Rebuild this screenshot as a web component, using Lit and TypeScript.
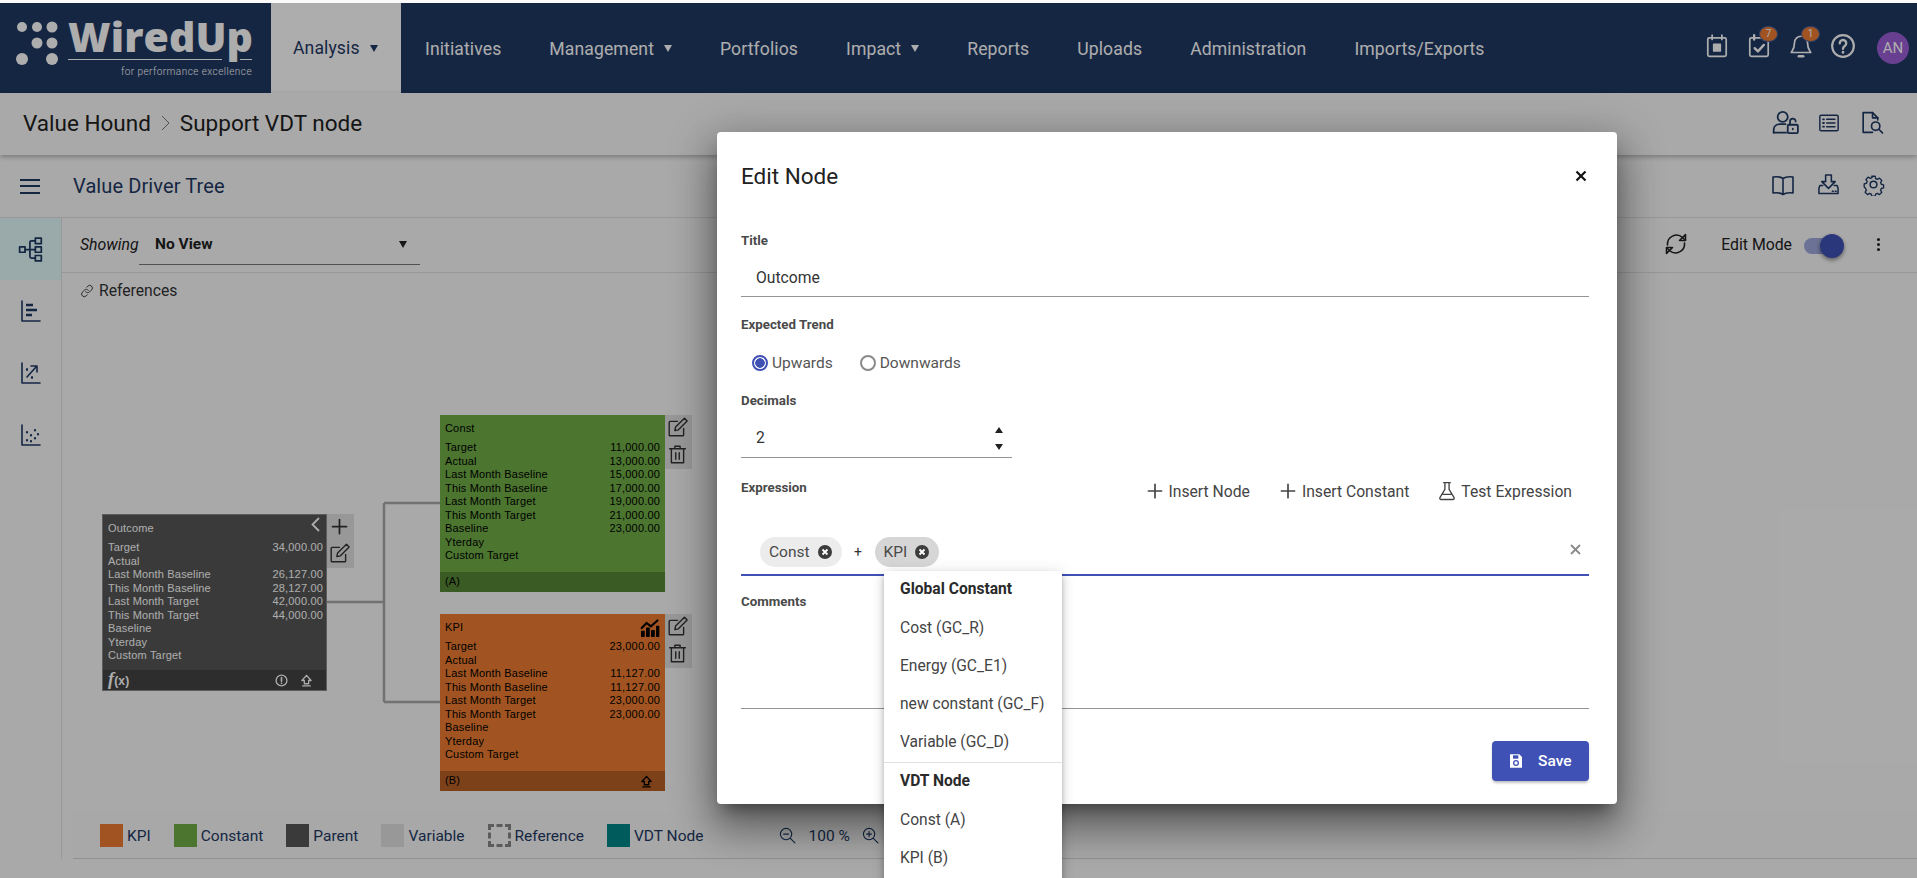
import { LitElement, html, css, svg } from "lit";
import { customElement } from "lit/decorators.js";

// stroke icons share one wrapper, 24 unit box
const icon = (body: unknown, size = 24) => html`<svg class="ico" width=${size} height=${size} viewBox="0 0 24 24" fill="none" stroke="currentColor" stroke-width="1.6" stroke-linecap="round" stroke-linejoin="round">${body}</svg>`;

const ICONS = {
    calendar: svg`<rect x="3.5" y="4.5" width="17" height="17" rx="1.5"/><path d="M7.5 2v4M16.5 2v4"/><rect x="9" y="10.5" width="6" height="6" fill="currentColor"/>`,
    tasks: svg`<rect x="3.5" y="4.5" width="17" height="17" rx="1.5"/><path d="M7.5 2v4M16.5 2v4M8 14l3 3 5.5-6" stroke-width="2.2"/>`,
    bell: svg`<path d="M12 3a6 6 0 0 0-6 6c0 6-2.5 8-3 9h18c-.5-1-3-3-3-9a6 6 0 0 0-6-6z"/><path d="M10 21.5h4" stroke-width="2.4"/>`,
    help: svg`<circle cx="12" cy="12" r="10" stroke-width="2"/><path d="M9 9.5a3 3 0 1 1 4.6 2.5c-1 .7-1.6 1.2-1.6 2.5" stroke-width="2.2"/><path d="M12 17.5v.5" stroke-width="2.4"/>`,
    userLock: svg`<circle cx="9.5" cy="7" r="4.5"/><path d="M1.5 21v-2.5c0-3 2.5-5 5.5-5h5"/><path d="M1.5 21h11"/><rect x="14" y="14" width="9" height="7.5" rx="1"/><path d="M16 14v-3a2.5 2.5 0 0 1 5 0"/><path d="M18.5 17.5v.5"/>`,
    list: svg`<rect x="2" y="3.5" width="20" height="17" rx="1.5"/><path d="M9.5 8h9M9.5 12h9M9.5 16h9"/><path d="M5.5 8h1M5.5 12h1M5.5 16h1" stroke-width="2"/>`,
    docSearch: svg`<path d="M13 21.5H4V2.5h9l5 5v2"/><path d="M13 2.5v5h5"/><circle cx="16" cy="15.5" r="4"/><path d="M19 18.5l3.5 3.5"/>`,
    book: svg`<path d="M12 5.5C10 4 6 3.500 2 4v16c4-.5 8 0 10 1.500 2-1.500 6-2 10-1.500V4c-4-.5-8 0-10 1.500zM12 5.500v16"/>`,
    download: svg`<path d="M9 2h6v7h4l-7 7-7-7h4z"/><path d="M6 13H3l-1 3v5.500h20V16l-1-3h-3"/><path d="M16 19h1M19 19h1"/>`,
    gear: svg`<circle cx="12" cy="12" r="3.500"/><path d="M10 2.500h4l.6 2.800 2 .9 2.500-1.500 2.800 2.800-1.500 2.500.9 2 2.700.7v3.600l-2.700.7-.9 2 1.500 2.500-2.800 2.800-2.500-1.500-2 .9-.6 2.500h-4l-.6-2.500-2-.9-2.500 1.500-2.800-2.800 1.500-2.500-.9-2L1 15.100v-3.600l2.700-.7.9-2-1.500-2.500 2.800-2.800 2.500 1.500 2-.9z" transform="translate(1.400 1.200) scale(.88)"/>`,
    refresh: svg`<path d="M3.500 13a9 9 0 0 1 15-7.500L21 8"/><path d="M21.500 2.500V8.500h-6z"/><path d="M20.500 11a9 9 0 0 1-15 7.500L3 16"/><path d="M2.500 21.500V15.500h6z"/>`,
    tree: svg`<rect x="1.500" y="10" width="5" height="5"/><rect x="16" y="2" width="5.500" height="5"/><rect x="16" y="10" width="5.500" height="5"/><rect x="16" y="18" width="5.500" height="5"/><path d="M6.500 12.500H16M16 4.500h-3.500a1.500 1.500 0 0 0-1.500 1.500v13a1.500 1.500 0 0 0 1.500 1.500H16"/>`,
    bars: svg`<path d="M3 2v20h18"/><path d="M7 6h7M7 11h11M7 16h6" stroke-width="2.500" stroke-linecap="butt"/>`,
    scatterUp: svg`<path d="M3 2v20h18"/><path d="M8 16L17 6M12 5h6v6"/><path d="M8 8v1M13 16v1" stroke-width="2"/>`,
    scatter: svg`<path d="M3 2v20h18"/><path d="M8 17v.5M12 12v.5M16 7v.5M8 9v.5M16 15v.5M12 18v.5M19 11v.5" stroke-width="2.200"/>`,
    link: svg`<path d="M9.500 13a4.500 4.500 0 0 0 7 .5l3.500-3.500a4.600 4.600 0 0 0-6.500-6.500l-2 2"/><path d="M14.500 11a4.500 4.500 0 0 0-7-.5L4 14a4.600 4.600 0 0 0 6.500 6.500l2-2"/>`,
    plus: svg`<path d="M12 4v16M4 12h16" stroke-width="2"/>`,
    edit: svg`<path d="M19 13v7.500a1 1 0 0 1-1 1H3.500a1 1 0 0 1-1-1V6a1 1 0 0 1 1-1H12"/><path d="M9 15.500l.8-4L20 1.500l3 3-10 10.200z"/>`,
    trash: svg`<path d="M3 5.500h18M9 5.500V2.500h6v3M5 5.500v16h14v-16M10 10v7.500M14 10v7.500"/>`,
    flask: svg`<path d="M8 2h8M9.500 2v8L3.500 20a1.500 1.500 0 0 0 1.300 2.200h14.400a1.500 1.500 0 0 0 1.300-2.200L14.500 10V2M7 16h10"/>`,
    zoomOut: svg`<circle cx="10" cy="10" r="8"/><path d="M16 16l6.500 6.500M6.500 10h7"/>`,
    zoomIn: svg`<circle cx="10" cy="10" r="8"/><path d="M16 16l6.500 6.500M6.500 10h7M10 6.500v7"/>`,
    upload: svg`<path d="M12 2.500L3.500 12H8v6h8v-6h4.500zM5 22h14" stroke-width="2.400"/>`,
    info: svg`<circle cx="12" cy="12" r="10" stroke-width="2.400"/><path d="M12 6.500v7M12 17v.5" stroke-width="3"/>`,
    chart: svg`<path d="M2 12l6-6 5 4 8-7" stroke-width="2.600"/><g fill="currentColor" stroke-width="1.400"><rect x="2" y="16" width="3" height="6"/><rect x="8" y="12" width="3" height="10"/><rect x="14" y="15" width="3" height="7"/><rect x="20" y="10" width="2.500" height="12"/></g>`,
    save: svg`<path d="M3 2h14l4 4v16H3z" fill="currentColor" stroke="none"/><rect x="7.500" y="3.500" width="8" height="5" fill="#3f51b5" stroke="none"/><circle cx="12" cy="15" r="3.500" fill="none" stroke="#3f51b5" stroke-width="2"/>`,
};

const chipCancel = html`<svg class="chip-x" width="14" height="14" viewBox="0 0 14 14"><circle cx="7" cy="7" r="7" fill="#3c3c3c"/><path d="M4.500 4.500l5 5M9.500 4.500l-5 5" stroke="#fff" stroke-width="1.800"/></svg>`;

const NAV = [
    { label: "Analysis", caret: true, active: true },
    { label: "Initiatives" },
    { label: "Management", caret: true },
    { label: "Portfolios" },
    { label: "Impact", caret: true },
    { label: "Reports" },
    { label: "Uploads" },
    { label: "Administration" },
    { label: "Imports/Exports" },
];

const LEGEND = [
    { label: "KPI", cls: "kpi" },
    { label: "Constant", cls: "constant" },
    { label: "Parent", cls: "parent" },
    { label: "Variable", cls: "variable" },
    { label: "Reference", cls: "reference" },
    { label: "VDT Node", cls: "vdt" },
];

const ROW_NAMES = ["Target", "Actual", "Last Month Baseline", "This Month Baseline", "Last Month Target", "This Month Target", "Baseline", "Yterday", "Custom Target"];

const NODES = [
    { title: "Outcome", cls: "parent", left: 40, top: 241, code: "", values: ["34,000.00", "", "26,127.00", "28,127.00", "42,000.00", "44,000.00", "", "", ""] },
    { title: "Const", cls: "constant", left: 378, top: 142, code: "(A)", values: ["11,000.00", "13,000.00", "15,000.00", "17,000.00", "19,000.00", "21,000.00", "23,000.00", "", ""] },
    { title: "KPI", cls: "kpi", left: 378, top: 341, code: "(B)", values: ["23,000.00", "", "11,127.00", "11,127.00", "23,000.00", "23,000.00", "", "", ""] },
];

@customElement("app-root")
export class AppRoot extends LitElement {
    static styles = css`
        :host {
            display: block;
            position: relative;
            height: 878px;
            overflow: hidden;
            font-family: Roboto, sans-serif;
            color: #212121;
            background: #fafafa;
        }
        * { box-sizing: border-box; }
        .ico { display: block; flex: none; }
        .page { display: flex; flex-direction: column; height: 100%; padding-top: 3px; }

        /* top navigation */
        .topbar { display: flex; height: 90px; flex: none; background: #1f3864; color: #fff; }
        .logo { width: 271px; flex: none; padding: 17px 0 0 16px; display: flex; gap: 8px; }
        .logo-text { width: 184px; display: flex; flex-direction: column; }
        .logo-name { font: 800 41px/32px "Open Sans", sans-serif; letter-spacing: .1px; height: 39px; white-space: nowrap; }
        .logo-rule { height: 1px; flex: none; background: linear-gradient(90deg, #fff 0 154px, transparent 154px 172px, #fff 172px); }
        .logo-tag { font: 300 10px/12px Roboto, sans-serif; letter-spacing: .45px; text-align: right; margin-top: 6px; white-space: nowrap; }
        .nav { display: flex; }
        .nav-item { display: flex; align-items: center; padding: 1px 24px 0; font-size: 17.600px; letter-spacing: .1px; height: 100%; }
        .nav-item.active { background: #fff; color: #1f3864; padding: 0 0 0 22px; width: 130px; }
        .caret { width: 0; height: 0; margin-left: 10px; border: 4.5px solid transparent; border-top: 7px solid currentColor; border-bottom: 0; }
        .top-icons { margin-left: auto; display: flex; align-items: center; padding-right: 8px; }
        .top-icon { position: relative; width: 42px; display: flex; justify-content: center; margin-top: -5px; }
        .badge { position: absolute; left: 21px; top: -7px; width: 19px; height: 16px; border-radius: 50%; background: #ed7d31; border: 1px solid #4b5f94; font-size: 10px; line-height: 13px; text-align: center; }
        .avatar { width: 32px; height: 32px; border-radius: 50%; background: #9b5ed6; font-size: 15px; line-height: 32px; text-align: center; margin-left: 13px; }

        /* breadcrumb */
        .crumbs { height: 62px; flex: none; display: flex; align-items: center; padding: 0 33px 3px 23px; font-size: 22.500px; box-shadow: 0 2px 5px rgba(0, 0, 0, .28); position: relative; gap: 10px; }
        .crumb-sep { color: #777; width: 9px; }
        .right-icons { margin-left: auto; display: flex; gap: 19px; color: #1f3864; align-items: center; }

        /* toolbar */
        .toolbar { height: 63px; flex: none; display: flex; align-items: center; padding: 0 32px 0 20px; border-bottom: 1px solid #e0e0e0; color: #1f3864; }
        .toolbar h1 { margin: 0 0 0 33px; font-size: 20px; font-weight: 400; letter-spacing: .1px; }
        .burger { width: 20px; height: 15px; border-top: 2px solid currentColor; border-bottom: 2px solid currentColor; position: relative; }
        .burger::after { content: ""; position: absolute; left: 0; right: 0; top: 4.500px; height: 2px; background: currentColor; }
        .toolbar .right-icons { gap: 22px; margin-top: -3px; }

        .body { flex: 1; display: flex; min-height: 0; }
        .rail { width: 62px; flex: none; border-right: 1px solid #e0e0e0; color: #1f3864; }
        .rail-item { height: 62px; display: flex; align-items: center; justify-content: center; }
        .rail-item.active { background: #e4fafa; }
        .main { flex: 1; display: flex; flex-direction: column; min-width: 0; }

        .filter { height: 55px; flex: none; display: flex; align-items: center; padding: 0 37px 2px 18px; border-bottom: 1px solid #e0e0e0; font-size: 15.800px; }
        .showing { font-style: italic; width: 59px; }
        .select { width: 281px; height: 38px; border-bottom: 1px solid #777; display: flex; align-items: center; padding: 0 13px 2px 16px; font-weight: 700; justify-content: space-between; margin-top: 3px; font-size: 15.500px; }
        .select .caret { border-top-color: #212121; }
        .filter-right { margin-left: auto; display: flex; align-items: center; }
        .edit-mode { margin-left: 33px; }
        .toggle { position: relative; width: 35px; height: 16px; border-radius: 8px; background: #a0a9dc; margin: 3px 38px 0 12px; }
        .knob { position: absolute; right: -5px; top: -4px; width: 24px; height: 24px; border-radius: 50%; background: #3f51b5; box-shadow: 0 2px 4px rgba(0, 0, 0, .45); }
        .kebab { width: 3px; height: 3px; border-radius: 50%; background: #212121; box-shadow: 0 -5px #212121, 0 5px #212121; }

        .canvas { flex: 1; position: relative; min-height: 0; }
        .refs { display: flex; align-items: center; gap: 5px; padding: 8px 0 0 18px; font-size: 15.700px; color: #333; }
        .wires { position: absolute; inset: 0; width: 100%; height: 100%; }
        .node { position: absolute; display: flex; align-items: flex-start; }
        .card { width: 225px; height: 177px; display: flex; flex-direction: column; font: 400 11px/13.500px "Liberation Sans", sans-serif; letter-spacing: .17px; }
        .card.parent { background: #565656; color: #fff; border: 1px solid #8a8a8a; }
        .card.constant { background: #70ad47; color: #000; }
        .card.kpi { background: #ed7d31; color: #000; }
        .card-head { height: 26px; padding: 1px 5px 0; display: flex; align-items: center; justify-content: space-between; }
        .card-rows { flex: 1; padding: 0 5px; }
        .card.parent .card-rows { padding-right: 3px; }
        .card-row { display: flex; justify-content: space-between; height: 13.500px; }
        .card-foot { height: 20px; background: rgba(0, 0, 0, .22); display: flex; align-items: center; padding: 0 5px; gap: 12px; }
        .card-foot .spacer { flex: 1; }
        .card.kpi .card-foot .ico { margin-right: 7px; }
        .card.parent .card-foot .ico:last-child { margin-right: 8px; }
        .fx { font: 700 12px/14px "Liberation Sans", sans-serif; }
        .fx i { font: italic 700 18px/14px "Liberation Serif", serif; }
        .chevron { margin-right: 1px; margin-top: -4px; }
        .actions { width: 27px; height: 54px; background: #e0e0e0; display: flex; flex-direction: column; align-items: center; gap: 6px; padding: 2px 2px 0 0; color: #333; }

        .legend { height: 46px; flex: none; margin-left: 11px; border-bottom: 1px solid #d8d8d8; display: flex; align-items: center; padding-left: 27px; font-size: 15.500px; background: #f8f8f8; color: #1f3864; }
        .legend-item { display: flex; align-items: center; gap: 4px; margin-right: 23px; }
        .swatch { width: 23px; height: 23px; }
        .swatch.kpi { background: #ed7d31; }
        .swatch.constant { background: #70ad47; }
        .swatch.parent { background: #565656; }
        .swatch.variable { background: #e0e0e0; }
        .swatch.reference { border: 3px dashed #888; }
        .swatch.vdt { background: #008888; }
        .zoom { display: flex; align-items: center; gap: 12px; margin-left: 53px; }
        .foot { height: 19px; flex: none; }

        /* dialog */
        .backdrop { position: absolute; inset: 3px 0 0 0; background: rgba(0, 0, 0, .32); }
        .modal { position: absolute; left: 717px; top: 132px; width: 900px; height: 672px; background: #fff; border-radius: 4px; padding: 0 28px 0 24px; box-shadow: 0 11px 15px -7px rgba(0, 0, 0, .4), 0 24px 38px 3px rgba(0, 0, 0, .3), 0 9px 46px 8px rgba(0, 0, 0, .2); }
        .modal-head { height: 88px; display: flex; align-items: center; justify-content: space-between; }
        .modal-head h2 { margin: 0; font-size: 22.500px; font-weight: 400; }
        .close { margin-right: 2px; }
        .label { font-size: 13.300px; font-weight: 700; line-height: 16px; color: #4a4a4a; margin-top: 13px; }
        .field { border-bottom: 1px solid #949494; font-size: 15.700px; padding-left: 15px; color: #333; }
        .title-field { height: 48px; padding-top: 19px; line-height: 20px; }
        .radios { display: flex; align-items: center; height: 36px; margin-top: 12px; padding-left: 11px; font-size: 15.500px; color: #555; }
        .radio { width: 16px; height: 16px; border-radius: 50%; border: 2px solid #8a8a8a; margin-right: 4px; }
        .radio.on { border-color: #3f51b5; background: radial-gradient(circle, #3f51b5 0 4.500px, #fff 5px); }
        .radio-label { margin-right: 27px; }
        .decimals { width: 271px; height: 49px; display: flex; justify-content: space-between; padding-top: 19px; line-height: 20px; }
        .spin { width: 10px; margin: -1px 7px 0 0; display: flex; flex-direction: column; gap: 11px; }
        .spin i { display: block; width: 0; height: 0; border: 4.500px solid transparent; border-top: 0; border-bottom: 6px solid #212121; }
        .spin i + i { transform: rotate(180deg); }
        .expr-head { display: flex; height: 34px; margin-top: 16px; }
        .expr-head .label { margin: 6px 0 0; }
        .tools { margin-left: auto; display: flex; align-items: center; padding-right: 17px; font-size: 15.700px; color: #444; }
        .tool { display: flex; align-items: center; gap: 4px; margin-left: 28px; }
        .chips { position: relative; height: 46px; margin-top: 22px; border-bottom: 2px solid #3f51b5; display: flex; align-items: center; padding: 0 0 0 19px; }
        .chip { height: 30px; border-radius: 15px; display: flex; align-items: center; gap: 8px; padding: 0 10px 0 9px; font-size: 15.500px; color: #4a4a4a; }
        .chip.plain { background: #ececec; }
        .chip.sel { background: #d6d6d6; }
        .op { width: 33px; text-align: center; font-size: 14px; color: #333; }
        .clear { position: absolute; right: 8px; top: 14px; }
        .notes { height: 99px; }
        .modal-foot { display: flex; justify-content: flex-end; margin-top: 32px; }
        .save { width: 97px; height: 40px; border: 0; border-radius: 4px; background: #3f51b5; color: #fff; font: 500 15.500px Roboto, sans-serif; display: flex; align-items: center; gap: 14px; padding: 0 0 0 16px; box-shadow: 0 3px 3px -2px rgba(0, 0, 0, .2), 0 2px 3px 0 rgba(0, 0, 0, .15); }

        .menu { position: absolute; left: 884px; top: 571px; width: 178px; height: 340px; padding-top: 1px; background: #fff; font-size: 15.600px; color: #444; box-shadow: 0 3px 5px -1px rgba(0, 0, 0, .2), 0 5px 8px rgba(0, 0, 0, .14), 0 1px 14px rgba(0, 0, 0, .12); }
        .menu-head { height: 37px; padding: 0 16px 3px; display: flex; align-items: center; font-weight: 700; color: #2a2a2a; }
        .menu-item { height: 38px; padding: 0 16px; display: flex; align-items: center; white-space: nowrap; }
        .menu hr { border: 0; border-top: 1px solid #e0e0e0; margin: 1px 0 1px; }
    `;

    private renderNode(n: (typeof NODES)[number]) {
        const isParent = n.cls === "parent";
        return html`
            <div class="node" style="left:${n.left}px;top:${n.top}px">
                <div class="card ${n.cls}">
                    <div class="card-head">
                        <span>${n.title}</span>
                        ${isParent ? html`<span class="chevron"><svg width="9" height="15" viewBox="0 0 9 15" fill="none" stroke="#fff" stroke-width="1.800"><path d="M8 1L1.500 7.500 8 14"/></svg></span>` : ""}
                        ${n.cls === "kpi" ? icon(ICONS.chart, 20) : ""}
                    </div>
                    <div class="card-rows">
                        ${ROW_NAMES.map((name, i) => html`<div class="card-row"><span>${name}</span><span>${n.values[i]}</span></div>`)}
                    </div>
                    <div class="card-foot">
                        ${isParent ? html`<span class="fx"><i>f</i>(x)</span>` : html`<span>${n.code}</span>`}
                        <span class="spacer"></span>
                        ${isParent ? icon(ICONS.info, 13) : ""}
                        ${n.cls !== "constant" ? icon(ICONS.upload, 13) : ""}
                    </div>
                </div>
                <div class="actions">
                    ${isParent ? icon(ICONS.plus, 21) : icon(ICONS.edit, 21)}
                    ${isParent ? icon(ICONS.edit, 21) : icon(ICONS.trash, 21)}
                </div>
            </div>
        `;
    }

    private renderPage() {
        return html`
            <div class="page">
                <header class="topbar">
                    <div class="logo">
                        <svg width="44" height="46" viewBox="0 0 44 46" fill="#fff">
                            <circle cx="6" cy="7" r="5"/><circle cx="21" cy="7" r="5"/><circle cx="36" cy="7" r="5.500"/>
                            <circle cx="21" cy="23" r="5.500"/><circle cx="36" cy="23" r="5.500"/>
                            <circle cx="6" cy="39" r="6"/><circle cx="36" cy="39" r="6"/>
                        </svg>
                        <div class="logo-text">
                            <div class="logo-name">WiredUp</div>
                            <div class="logo-rule"></div>
                            <div class="logo-tag">for performance excellence</div>
                        </div>
                    </div>
                    <nav class="nav">
                        ${NAV.map((n) => html`<div class="nav-item ${n.active ? "active" : ""}">${n.label}${n.caret ? html`<span class="caret"></span>` : ""}</div>`)}
                    </nav>
                    <div class="top-icons">
                        <div class="top-icon">${icon(ICONS.calendar, 26)}</div>
                        <div class="top-icon">${icon(ICONS.tasks, 26)}<span class="badge">7</span></div>
                        <div class="top-icon">${icon(ICONS.bell, 26)}<span class="badge">1</span></div>
                        <div class="top-icon">${icon(ICONS.help, 26)}</div>
                        <div class="avatar">AN</div>
                    </div>
                </header>
                <div class="crumbs">
                    <span>Value Hound</span>
                    <svg class="crumb-sep" width="9" height="18" viewBox="0 0 9 18" fill="none" stroke="currentColor"><path d="M1 2l7 7-7 7"/></svg>
                    <span>Support VDT node</span>
                    <div class="right-icons">
                        ${icon(ICONS.userLock, 27)}${icon(ICONS.list, 22)}${icon(ICONS.docSearch, 25)}
                    </div>
                </div>
                <div class="toolbar">
                    <div class="burger"></div>
                    <h1>Value Driver Tree</h1>
                    <div class="right-icons">
                        ${icon(ICONS.book, 24)}${icon(ICONS.download, 23)}${icon(ICONS.gear, 23)}
                    </div>
                </div>
                <div class="body">
                    <aside class="rail">
                        <div class="rail-item active">${icon(ICONS.tree, 26)}</div>
                        <div class="rail-item">${icon(ICONS.bars)}</div>
                        <div class="rail-item">${icon(ICONS.scatterUp)}</div>
                        <div class="rail-item">${icon(ICONS.scatter)}</div>
                    </aside>
                    <div class="main">
                        <div class="filter">
                            <span class="showing">Showing</span>
                            <div class="select"><span>No View</span><span class="caret"></span></div>
                            <div class="filter-right">
                                ${icon(ICONS.refresh, 24)}
                                <span class="edit-mode">Edit Mode</span>
                                <div class="toggle"><span class="knob"></span></div>
                                <span class="kebab"></span>
                            </div>
                        </div>
                        <div class="canvas">
                            <div class="refs">${icon(ICONS.link, 14)}<span>References</span></div>
                            <svg class="wires" fill="none" stroke="#a8a8a8" stroke-width="2.500">
                                <path d="M265 329H322M322 230V429M322 230H378M322 429H378"/>
                            </svg>
                            ${NODES.map((n) => this.renderNode(n))}
                        </div>
                        <div class="legend">
                            ${LEGEND.map((l) => html`<div class="legend-item"><span class="swatch ${l.cls}"></span><span>${l.label}</span></div>`)}
                            <div class="zoom">${icon(ICONS.zoomOut, 17)}<span>100 %</span>${icon(ICONS.zoomIn, 17)}</div>
                        </div>
                    </div>
                </div>
                <div class="foot"></div>
            </div>
        `;
    }

    private renderDialog() {
        return html`
            <div class="backdrop"></div>
            <section class="modal">
                <div class="modal-head">
                    <h2>Edit Node</h2>
                    <svg class="close" width="12" height="12" viewBox="0 0 12 12" stroke="#111" stroke-width="2.200"><path d="M1.500 1.500l9 9M10.500 1.500l-9 9"/></svg>
                </div>
                <div class="label">Title</div>
                <div class="field title-field">Outcome</div>
                <div class="label" style="margin-top:20px">Expected Trend</div>
                <div class="radios">
                    <span class="radio on"></span><span class="radio-label">Upwards</span>
                    <span class="radio"></span><span>Downwards</span>
                </div>
                <div class="label" style="margin-top:12px">Decimals</div>
                <div class="field decimals"><span>2</span><span class="spin"><i></i><i></i></span></div>
                <div class="expr-head">
                    <div class="label">Expression</div>
                    <div class="tools">
                        <span class="tool">${icon(ICONS.plus, 20)}Insert Node</span>
                        <span class="tool">${icon(ICONS.plus, 20)}Insert Constant</span>
                        <span class="tool">${icon(ICONS.flask, 20)}Test Expression</span>
                    </div>
                </div>
                <div class="chips">
                    <span class="chip plain">Const ${chipCancel}</span>
                    <span class="op">+</span>
                    <span class="chip sel">KPI ${chipCancel}</span>
                    <svg class="clear" width="11" height="11" viewBox="0 0 11 11" stroke="#8a8a8a" stroke-width="1.800"><path d="M1 1l9 9M10 1l-9 9"/></svg>
                </div>
                <div class="label" style="margin-top:18px">Comments</div>
                <div class="field notes"></div>
                <div class="modal-foot">
                    <button class="save">${icon(ICONS.save, 16)}Save</button>
                </div>
            </section>
            <div class="menu">
                <div class="menu-head">Global Constant</div>
                <div class="menu-item">Cost (GC_R)</div>
                <div class="menu-item">Energy (GC_E1)</div>
                <div class="menu-item">new constant (GC_F)</div>
                <div class="menu-item">Variable (GC_D)</div>
                <hr />
                <div class="menu-head">VDT Node</div>
                <div class="menu-item">Const (A)</div>
                <div class="menu-item">KPI (B)</div>
            </div>
        `;
    }

    render() {
        return html`${this.renderPage()}${this.renderDialog()}`;
    }
}
